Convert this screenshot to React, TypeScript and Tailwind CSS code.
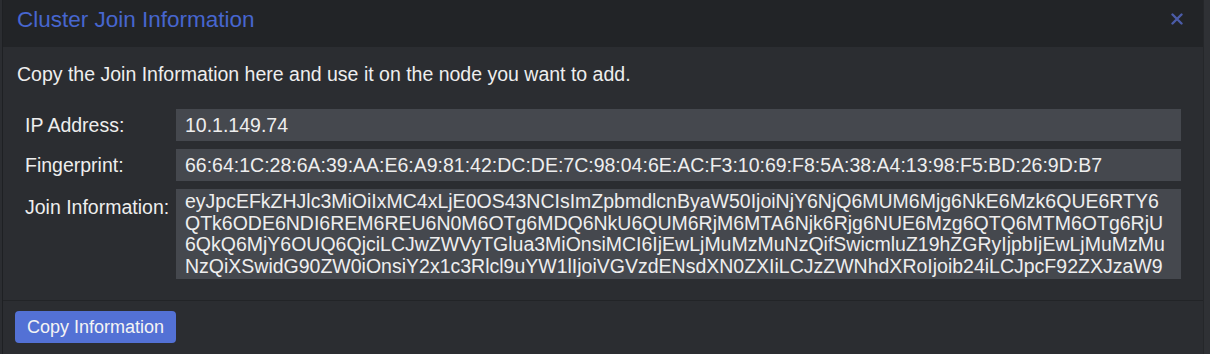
import React from "react";

const joinLines = [
  "eyJpcEFkZHJlc3MiOiIxMC4xLjE0OS43NCIsImZpbmdlcnByaW50IjoiNjY6NjQ6MUM6Mjg6NkE6Mzk6QUE6RTY6",
  "QTk6ODE6NDI6REM6REU6N0M6OTg6MDQ6NkU6QUM6RjM6MTA6Njk6Rjg6NUE6Mzg6QTQ6MTM6OTg6RjU",
  "6QkQ6MjY6OUQ6QjciLCJwZWVyTGlua3MiOnsiMCI6IjEwLjMuMzMuNzQifSwicmluZ19hZGRyIjpbIjEwLjMuMzMu",
  "NzQiXSwidG90ZW0iOnsiY2x1c3Rlcl9uYW1lIjoiVGVzdENsdXN0ZXIiLCJzZWNhdXRoIjoib24iLCJpcF92ZXJzaW9",
];

export default function App() {
  return (
    <div
      className="flex h-[354px] w-[1210px] overflow-hidden bg-[#2e3034] text-[#eeeeee]"
      style={{ fontFamily: '"Liberation Sans", Arial, sans-serif' }}
    >
      <div className="w-[3px] shrink-0 bg-[#2b2d31] border-r border-[#1e2023]" />
      <div className="flex w-[1200px] shrink-0 flex-col bg-[#2b2d31]">
        <div className="flex h-[47px] shrink-0 items-center justify-between bg-[#222427] pl-[14px] pr-[20px]">
          <span className="text-[22.5px] leading-[26px] text-[#4766cf] -mt-[7px]">Cluster Join Information</span>
          <svg width="12" height="12" viewBox="0 0 12 12" className="-mt-[9px]">
            <path d="M1.5 1.5 L10.5 10.5 M10.5 1.5 L1.5 10.5" stroke="#4b5ca8" strokeWidth="2.4" strokeLinecap="round" />
          </svg>
        </div>
        <div className="flex flex-1 flex-col">
          <p className="mt-[16px] pl-[14px] text-[19.5px] leading-[22.5px]">
            Copy the Join Information here and use it on the node you want to add.
          </p>
          <div className="mt-[23.5px] flex flex-col gap-[8px] pl-[22px] pr-[22px]">
            <div className="flex h-[32px] items-center">
              <div className="w-[151px] shrink-0 text-[19.5px] leading-[22.5px]">IP Address:</div>
              <div className="flex h-full flex-1 items-center bg-[#45484e] pl-[9px] text-[19.5px] leading-[22.5px]">
                10.1.149.74
              </div>
            </div>
            <div className="flex h-[32px] items-center">
              <div className="w-[151px] shrink-0 text-[19.5px] leading-[22.5px]">Fingerprint:</div>
              <div className="flex h-full flex-1 items-center bg-[#45484e] pl-[9px] text-[19.5px] leading-[22.5px] whitespace-nowrap">
                66:64:1C:28:6A:39:AA:E6:A9:81:42:DC:DE:7C:98:04:6E:AC:F3:10:69:F8:5A:38:A4:13:98:F5:BD:26:9D:B7
              </div>
            </div>
            <div className="flex h-[90px] items-start">
              <div className="mt-[7px] w-[151px] shrink-0 text-[19.5px] leading-[22.5px]">Join Information:</div>
              <div className="h-full flex-1 overflow-hidden bg-[#45484e] pl-[9px] pt-[2px] text-[19.5px] leading-[21.7px]">
                {joinLines.map((l, i) => (
                  <div key={i} className="whitespace-nowrap">{l}</div>
                ))}
              </div>
            </div>
          </div>
        </div>
        <div className="flex h-[54px] shrink-0 items-start border-t border-[#222427] pl-[12px] pt-[10px]">
          <button className="flex h-[32px] w-[161px] items-center justify-center rounded-[4px] bg-[#5371d5] text-[18px] leading-[20px] text-[#f4f4f4]">
            Copy Information
          </button>
        </div>
      </div>
      <div className="flex-1 border-l border-[#25272a] bg-[#2f3135]" />
    </div>
  );
}
